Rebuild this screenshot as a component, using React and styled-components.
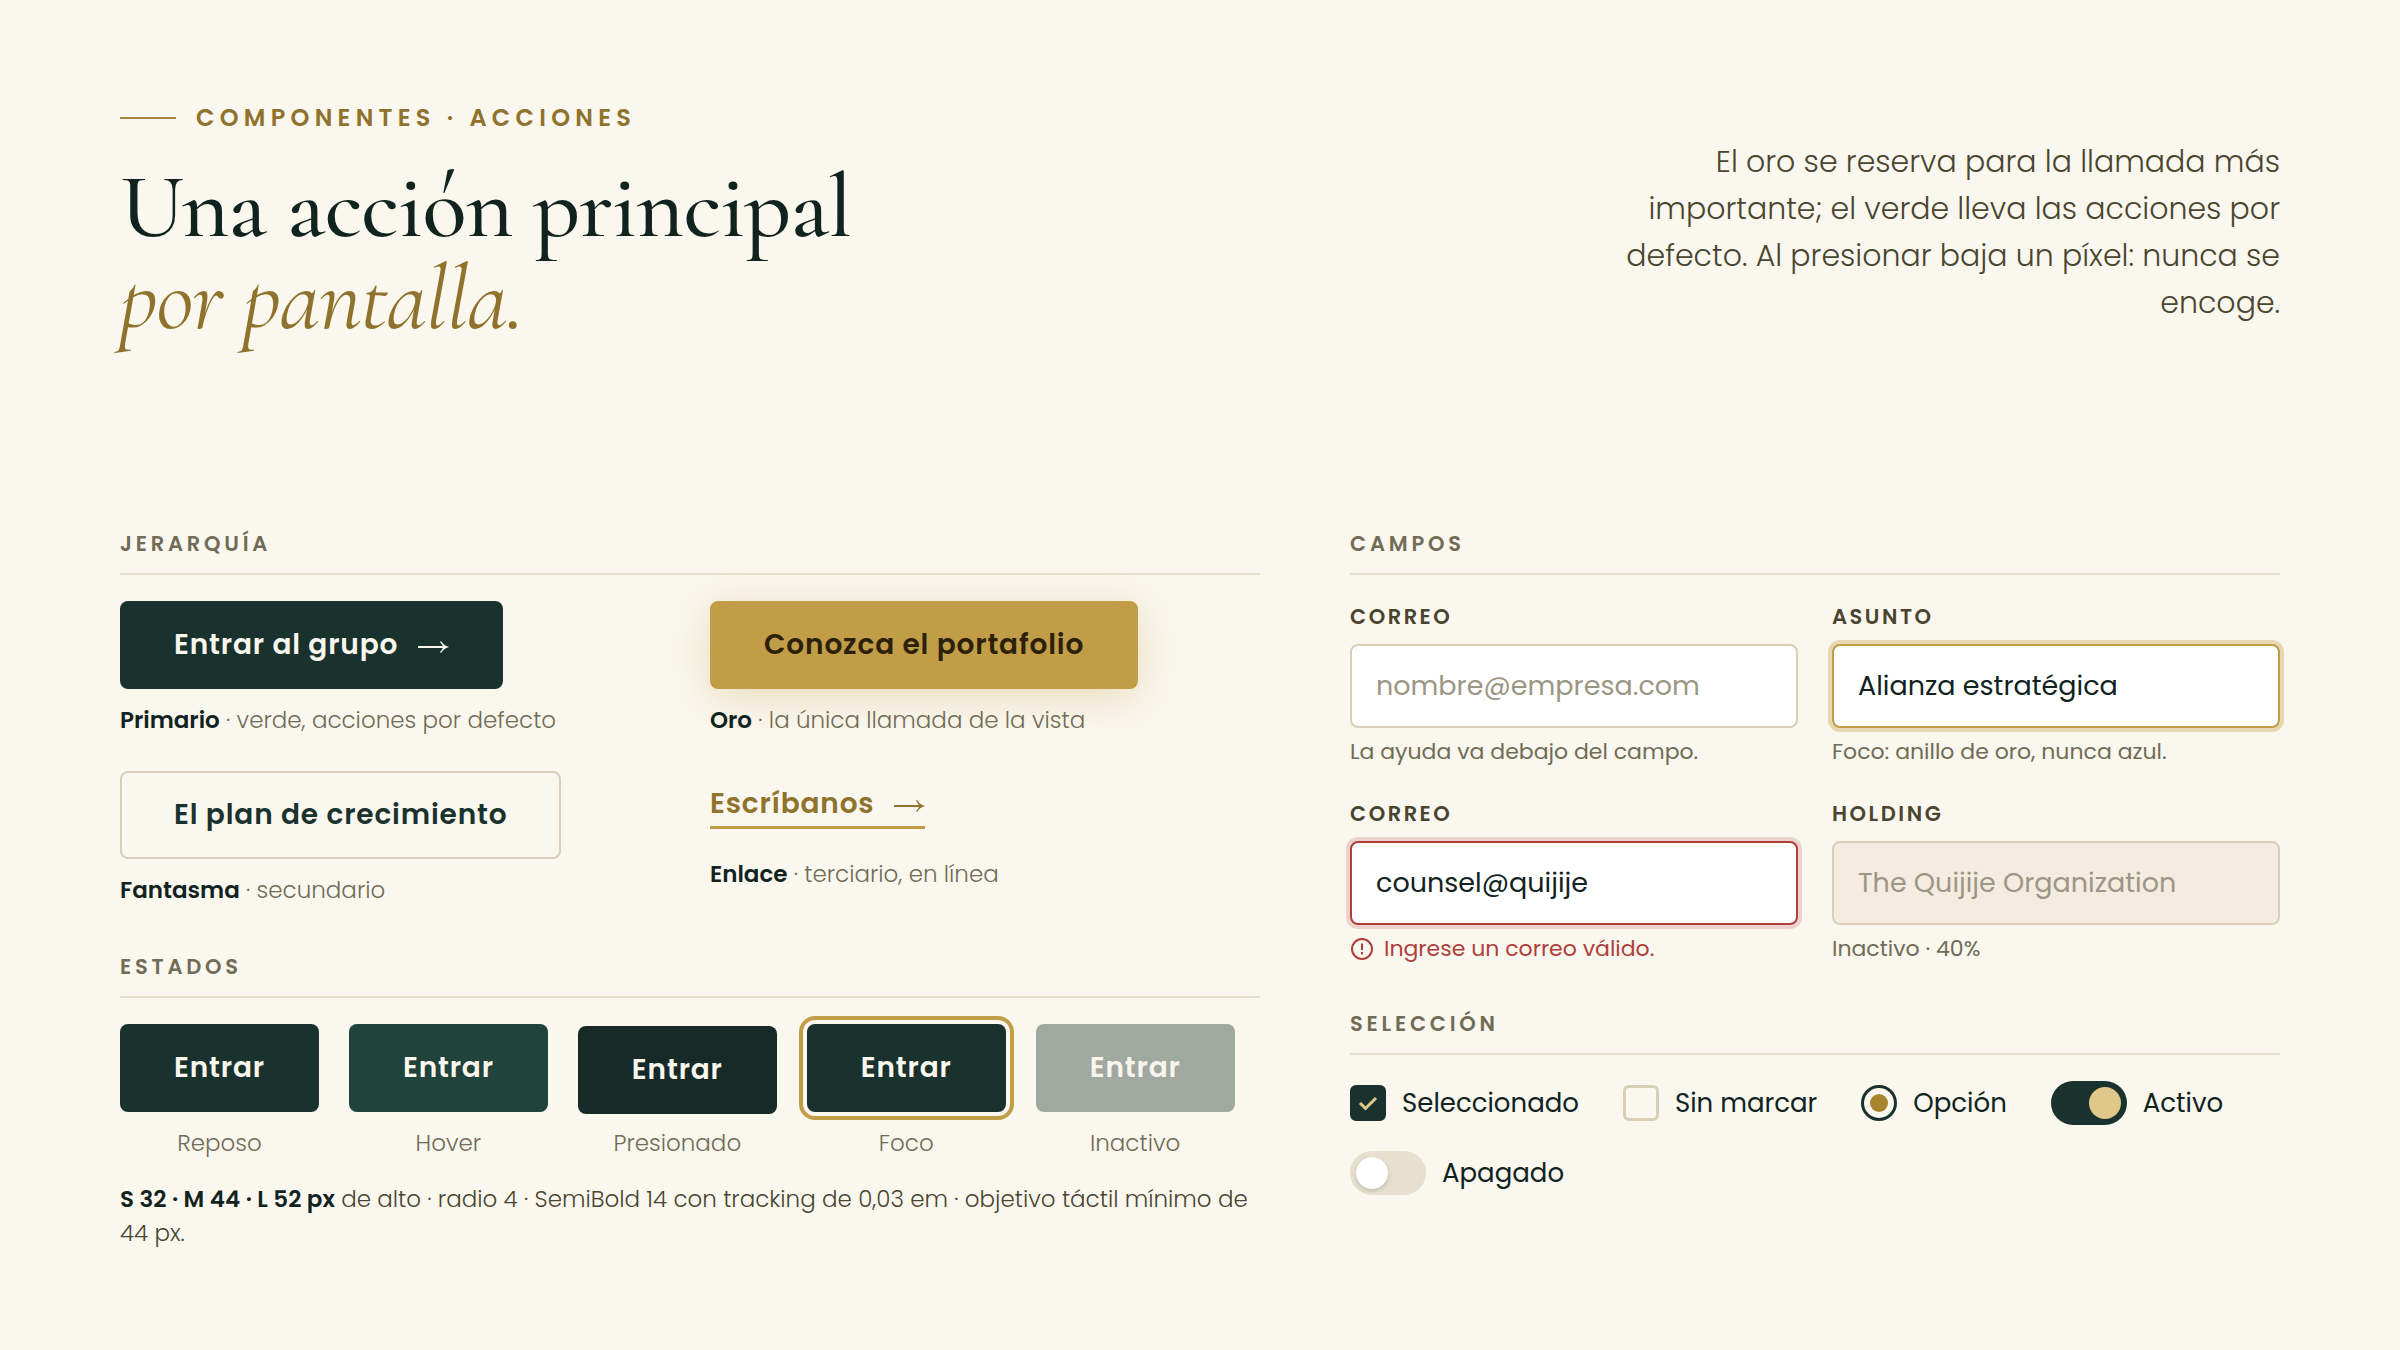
import styled, { createGlobalStyle, css } from 'styled-components'

const colors = {
    bg: '#faf7ee',
    ink: '#11231f',
    green: '#1a322e',
    greenHover: '#20433b',
    greenPressed: '#162b28',
    gold: '#c29d48',
    goldDark: '#8f722c',
    goldLight: '#dfc88a',
    text: '#4a452f',
    muted: '#716c55',
    faint: '#9c9684',
    line: '#e6e0ca',
    border: '#d9cfb8',
    error: '#b03f3a',
}

const GlobalStyle = createGlobalStyle`
    *, *::before, *::after {
        box-sizing: border-box;
    }
    body {
        margin: 0;
        background: ${colors.bg};
        color: ${colors.ink};
        font-family: Poppins, Inter, sans-serif;
        font-size: 23px;
        line-height: 34px;
    }
`

const Page = styled.div`
    min-height: 100vh;
    padding: 101px 120px;
`
const Header = styled.header`
    display: flex;
    justify-content: space-between;
    align-items: center;
`
const Eyebrow = styled.p`
    display: flex;
    align-items: center;
    gap: 20px;
    margin: 0 0 26px;
    font-size: 24px;
    font-weight: 600;
    letter-spacing: 0.22em;
    text-transform: uppercase;
    color: ${colors.goldDark};
    &::before {
        content: '';
        width: 56px;
        height: 2px;
        background: #a88a45;
    }
`
const Title = styled.h1`
    margin: 0;
    font-family: 'Cormorant Garamond', 'Liberation Serif', serif;
    font-size: 92px;
    font-weight: 500;
    line-height: 92px;
    letter-spacing: -0.01em;
    em {
        font-weight: 400;
        color: ${colors.goldDark};
    }
`
const Intro = styled.p`
    max-width: 680px;
    margin: 18px 0 0;
    font-size: 30px;
    font-weight: 300;
    line-height: 47px;
    text-align: right;
    color: ${colors.text};
`
const Main = styled.main`
    display: grid;
    grid-template-columns: 38fr 31fr;
    gap: 90px;
    margin-top: 182px;
`
const Column = styled.div`
    display: flex;
    flex-direction: column;
    gap: 42px;
`
const SectionTitle = styled.h2`
    margin: 0 0 26px;
    padding-bottom: 12px;
    border-bottom: 2px solid ${colors.line};
    font-size: 21px;
    font-weight: 600;
    letter-spacing: 0.18em;
    text-transform: uppercase;
    color: ${colors.muted};
`
const Actions = styled.div`
    display: grid;
    grid-template-columns: 1fr 1fr;
    gap: 33px 40px;
`
const ActionItem = styled.div`
    display: flex;
    flex-direction: column;
    align-items: flex-start;
    gap: 14px;
`
const Caption = styled.p`
    margin: 0;
    font-weight: 300;
    line-height: 35px;
    color: ${colors.muted};
    strong {
        font-weight: 600;
        color: ${colors.ink};
    }
`

const buttonVariants = {
    gold: css`
        background: ${colors.gold};
        color: #2b210a;
        box-shadow: 0 8px 40px rgba(194, 157, 72, 0.3);
    `,
    ghost: css`
        background: transparent;
        border-color: ${colors.border};
        color: ${colors.green};
    `,
}
const buttonStates = {
    hover: css`
        background: ${colors.greenHover};
    `,
    pressed: css`
        background: ${colors.greenPressed};
        transform: translateY(2px);
    `,
    focus: css`
        outline: 4px solid ${colors.gold};
        outline-offset: 4px;
    `,
    disabled: css`
        background: #a0a9a0;
        color: #f8f5ec;
    `,
}
const Button = styled.button`
    display: inline-flex;
    align-items: center;
    gap: 20px;
    height: 88px;
    padding: 0 52px;
    border: 2px solid transparent;
    border-radius: 8px;
    background: ${colors.green};
    color: ${colors.bg};
    font: inherit;
    font-size: 28px;
    font-weight: 600;
    letter-spacing: 0.03em;
    white-space: nowrap;
    cursor: pointer;
    ${(props) => buttonVariants[props.$variant]}
    ${(props) => buttonStates[props.$state]}
`
const TextLink = styled.a`
    display: inline-flex;
    align-items: center;
    gap: 20px;
    margin: 14px 0;
    padding-bottom: 4px;
    border-bottom: 3px solid ${colors.gold};
    font-size: 28px;
    font-weight: 600;
    line-height: 37px;
    letter-spacing: 0.03em;
    text-decoration: none;
    color: ${colors.goldDark};
`
const ArrowIcon = styled.svg`
    width: 31px;
    height: 14px;
    margin-top: 4px;
    fill: none;
    stroke: currentColor;
    stroke-width: 2;
    path:last-child {
        fill: currentColor;
        stroke: none;
    }
`
const States = styled.div`
    display: flex;
    flex-wrap: wrap;
    gap: 30px;
`
const StateItem = styled.div`
    display: flex;
    flex-direction: column;
    align-items: center;
    gap: 14px;
`
const Note = styled.p`
    margin: 21px 0 0;
    font-weight: 300;
    color: ${colors.text};
    strong {
        font-weight: 600;
        color: ${colors.ink};
    }
`
const Fields = styled.div`
    display: grid;
    grid-template-columns: 1fr 1fr;
    gap: 30px 34px;
`
const FieldItem = styled.div`
    display: flex;
    flex-direction: column;
`
const Label = styled.label`
    margin-bottom: 11px;
    font-size: 21px;
    font-weight: 600;
    line-height: 32px;
    letter-spacing: 0.12em;
    text-transform: uppercase;
    color: ${colors.text};
`
const inputStates = {
    focus: css`
        border-color: ${colors.gold};
        box-shadow: 0 0 0 4px #e8d7b3;
    `,
    error: css`
        border-color: ${colors.error};
        box-shadow: 0 0 0 4px #ecd2cd;
    `,
}
const Input = styled.input`
    width: 100%;
    height: 84px;
    padding: 0 24px;
    border: 2px solid ${colors.border};
    border-radius: 8px;
    outline: none;
    background: white;
    color: ${colors.ink};
    font: inherit;
    font-size: 27px;
    &::placeholder {
        color: ${colors.faint};
        opacity: 1;
    }
    &:disabled {
        background: #f4ece0;
        color: ${colors.faint};
    }
    ${(props) => inputStates[props.$state]}
`
const Help = styled.p`
    display: flex;
    align-items: center;
    gap: 10px;
    margin: 8px 0 0;
    font-size: 22px;
    line-height: 32px;
    color: ${(props) => (props.$error ? colors.error : colors.muted)};
`
const ErrorIcon = styled.svg`
    width: 24px;
    height: 24px;
    fill: none;
    stroke: currentColor;
    stroke-width: 2;
`
const Options = styled.div`
    display: flex;
    flex-wrap: wrap;
    gap: 26px 44px;
`
const Option = styled.label`
    display: flex;
    align-items: center;
    gap: 16px;
    min-height: 44px;
    font-size: 26px;
    cursor: pointer;
`
const CheckWrap = styled.span`
    position: relative;
    display: flex;
`
const Checkbox = styled.input`
    appearance: none;
    width: 36px;
    height: 36px;
    margin: 0;
    border: 3px solid ${colors.border};
    border-radius: 6px;
    &:checked {
        border-color: ${colors.green};
        background: ${colors.green};
    }
`
const CheckMark = styled.svg`
    position: absolute;
    inset: 0;
    pointer-events: none;
    fill: none;
    stroke: ${colors.goldLight};
    stroke-width: 3;
`
const Radio = styled.input`
    appearance: none;
    display: grid;
    place-items: center;
    width: 36px;
    height: 36px;
    margin: 0;
    border: 3px solid ${colors.green};
    border-radius: 50%;
    &:checked::before {
        content: '';
        width: 18px;
        height: 18px;
        border-radius: 50%;
        background: #a8842e;
    }
`
const Switch = styled.input`
    appearance: none;
    display: flex;
    width: 76px;
    height: 44px;
    margin: 0;
    padding: 6px;
    border-radius: 22px;
    background: #e8e0cf;
    &::before {
        content: '';
        width: 32px;
        height: 32px;
        border-radius: 50%;
        background: white;
        box-shadow: 0 2px 4px rgba(17, 35, 31, 0.2);
    }
    &:checked {
        justify-content: flex-end;
        background: ${colors.green};
    }
    &:checked::before {
        background: ${colors.goldLight};
        box-shadow: none;
    }
`

const Arrow = () => (
    <ArrowIcon viewBox='0 0 31 14' aria-hidden='true'>
        <path d='M0 7H28' />
        <path d='M23 1C25 4 27 6 31 7C27 8 25 10 23 13L22 12C24 10 25 8 25 7C25 6 24 4 22 2Z' />
    </ArrowIcon>
)

const Section = (props) => {
    const { title, children } = props
    return (
        <section>
            <SectionTitle>{title}</SectionTitle>
            {children}
        </section>
    )
}

const Action = (props) => {
    const { name, note, children } = props
    return (
        <ActionItem>
            {children}
            <Caption><strong>{name}</strong> · {note}</Caption>
        </ActionItem>
    )
}

const Field = (props) => {
    const { id, label, help, state, ...rest } = props
    return (
        <FieldItem>
            <Label htmlFor={id}>{label}</Label>
            <Input id={id} $state={state} aria-describedby={`${id}-help`} {...rest} />
            <Help id={`${id}-help`} $error={state === 'error'}>
                {state === 'error' && (
                    <ErrorIcon viewBox='0 0 24 24' aria-hidden='true'>
                        <circle cx='12' cy='12' r='10' />
                        <path d='M12 6.5V13M12 15V17.5' />
                    </ErrorIcon>
                )}
                {help}
            </Help>
        </FieldItem>
    )
}

const states = [
    { label: 'Reposo', state: 'rest' },
    { label: 'Hover', state: 'hover' },
    { label: 'Presionado', state: 'pressed' },
    { label: 'Foco', state: 'focus' },
    { label: 'Inactivo', state: 'disabled' },
]

const App = () => {
    return (
        <Page>
            <GlobalStyle />
            <Header>
                <div>
                    <Eyebrow>Componentes · Acciones</Eyebrow>
                    <Title>Una acción principal<br /><em>por pantalla.</em></Title>
                </div>
                <Intro>
                    El oro se reserva para la llamada más importante; el verde lleva las acciones
                    por defecto. Al presionar baja un píxel: nunca se encoge.
                </Intro>
            </Header>
            <Main>
                <Column>
                    <Section title='Jerarquía'>
                        <Actions>
                            <Action name='Primario' note='verde, acciones por defecto'>
                                <Button>Entrar al grupo <Arrow /></Button>
                            </Action>
                            <Action name='Oro' note='la única llamada de la vista'>
                                <Button $variant='gold'>Conozca el portafolio</Button>
                            </Action>
                            <Action name='Fantasma' note='secundario'>
                                <Button $variant='ghost'>El plan de crecimiento</Button>
                            </Action>
                            <Action name='Enlace' note='terciario, en línea'>
                                <TextLink href='#escribanos'>Escríbanos <Arrow /></TextLink>
                            </Action>
                        </Actions>
                    </Section>
                    <Section title='Estados'>
                        <States>
                            {states.map(({ label, state }) => (
                                <StateItem key={state}>
                                    <Button $state={state} disabled={state === 'disabled'}>Entrar</Button>
                                    <Caption>{label}</Caption>
                                </StateItem>
                            ))}
                        </States>
                        <Note>
                            <strong>S 32 · M 44 · L 52 px</strong> de alto · radio 4 · SemiBold 14 con tracking
                            de 0,03 em · objetivo táctil mínimo de 44&nbsp;px.
                        </Note>
                    </Section>
                </Column>
                <Column>
                    <Section title='Campos'>
                        <Fields>
                            <Field id='correo' label='Correo' type='email' placeholder='nombre@empresa.com' help='La ayuda va debajo del campo.' />
                            <Field id='asunto' label='Asunto' type='text' state='focus' defaultValue='Alianza estratégica' help='Foco: anillo de oro, nunca azul.' />
                            <Field id='correo-error' label='Correo' type='text' state='error' aria-invalid='true' defaultValue='counsel@quijije' help='Ingrese un correo válido.' />
                            <Field id='holding' label='Holding' type='text' disabled defaultValue='The Quijije Organization' help='Inactivo · 40%' />
                        </Fields>
                    </Section>
                    <Section title='Selección'>
                        <Options>
                            <Option>
                                <CheckWrap>
                                    <Checkbox type='checkbox' defaultChecked />
                                    <CheckMark viewBox='0 0 36 36' aria-hidden='true'>
                                        <path d='M10 18L15.5 23.5L26 13' />
                                    </CheckMark>
                                </CheckWrap>
                                Seleccionado
                            </Option>
                            <Option>
                                <Checkbox type='checkbox' />
                                Sin marcar
                            </Option>
                            <Option>
                                <Radio type='radio' name='opcion' defaultChecked />
                                Opción
                            </Option>
                            <Option>
                                <Switch type='checkbox' role='switch' defaultChecked />
                                Activo
                            </Option>
                            <Option>
                                <Switch type='checkbox' role='switch' />
                                Apagado
                            </Option>
                        </Options>
                    </Section>
                </Column>
            </Main>
        </Page>
    )
}

export default App
